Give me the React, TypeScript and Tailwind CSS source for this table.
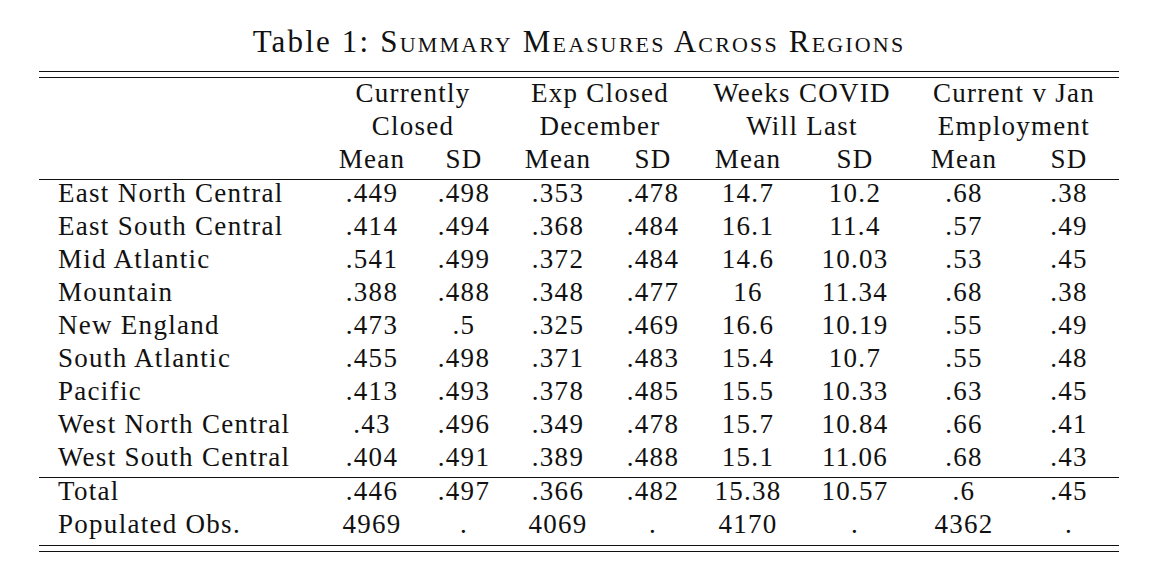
import React from 'react';

type Row = { label: string; values: string[] };

const groups = [
  ['Currently', 'Closed'],
  ['Exp Closed', 'December'],
  ['Weeks COVID', 'Will Last'],
  ['Current v Jan', 'Employment'],
];

const regions: Row[] = [
  { label: 'East North Central', values: ['.449', '.498', '.353', '.478', '14.7', '10.2', '.68', '.38'] },
  { label: 'East South Central', values: ['.414', '.494', '.368', '.484', '16.1', '11.4', '.57', '.49'] },
  { label: 'Mid Atlantic', values: ['.541', '.499', '.372', '.484', '14.6', '10.03', '.53', '.45'] },
  { label: 'Mountain', values: ['.388', '.488', '.348', '.477', '16', '11.34', '.68', '.38'] },
  { label: 'New England', values: ['.473', '.5', '.325', '.469', '16.6', '10.19', '.55', '.49'] },
  { label: 'South Atlantic', values: ['.455', '.498', '.371', '.483', '15.4', '10.7', '.55', '.48'] },
  { label: 'Pacific', values: ['.413', '.493', '.378', '.485', '15.5', '10.33', '.63', '.45'] },
  { label: 'West North Central', values: ['.43', '.496', '.349', '.478', '15.7', '10.84', '.66', '.41'] },
  { label: 'West South Central', values: ['.404', '.491', '.389', '.488', '15.1', '11.06', '.68', '.43'] },
];

const totals: Row[] = [
  { label: 'Total', values: ['.446', '.497', '.366', '.482', '15.38', '10.57', '.6', '.45'] },
  { label: 'Populated Obs.', values: ['4969', '.', '4069', '.', '4170', '.', '4362', '.'] },
];

// column widths follow the LaTeX tabular (label + 4 x Mean/SD)
const gridCols = 'grid grid-cols-[282px_102px_82px_106px_84px_106px_108px_110px_100px]';

const Rule: React.FC = () => <div className="h-px w-full bg-[#111]" />;

const DataRow: React.FC<{ row: Row }> = ({ row }) => (
  <div className={`${gridCols} h-[33px] leading-[26px]`}>
    <div className="pl-[19px] whitespace-nowrap">{row.label}</div>
    {row.values.map((v, i) => (
      <div key={i} className="text-center whitespace-nowrap">{v}</div>
    ))}
  </div>
);

const App: React.FC = () => {
  return (
    <div className="min-h-screen w-full bg-white text-[#111] font-['Liberation_Serif',serif] tracking-[0.08em]">
      <div className="ml-[39px] w-[1080px] pt-[26px]">
        <div className="text-center text-[31px] leading-[31px] tracking-[0.07em] whitespace-nowrap">
          Table 1: <span className="[font-variant-caps:small-caps]">Summary Measures Across Regions</span>
        </div>

        <div className="mt-[14px] text-[27px]">
          <Rule />
          <div className="mt-[5px]">
            <Rule />
          </div>

          <div className="mt-[2px]">
            <div className={`${gridCols} h-[33px] leading-[26px]`}>
              <div />
              {groups.map((g, i) => (
                <div key={i} className="col-span-2 text-center whitespace-nowrap">{g[0]}</div>
              ))}
            </div>
            <div className={`${gridCols} h-[33px] leading-[26px]`}>
              <div />
              {groups.map((g, i) => (
                <div key={i} className="col-span-2 text-center whitespace-nowrap">{g[1]}</div>
              ))}
            </div>
            <div className={`${gridCols} h-[33px] leading-[26px]`}>
              <div />
              {groups.map((_, i) => (
                <React.Fragment key={i}>
                  <div className="text-center">Mean</div>
                  <div className="text-center">SD</div>
                </React.Fragment>
              ))}
            </div>
          </div>

          <Rule />
          {regions.map((row) => (
            <DataRow key={row.label} row={row} />
          ))}
          <Rule />
          {totals.map((row) => (
            <DataRow key={row.label} row={row} />
          ))}

          <div className="mt-px">
            <Rule />
          </div>
          <div className="mt-[5px]">
            <Rule />
          </div>
        </div>
      </div>
    </div>
  );
};

export default App;
